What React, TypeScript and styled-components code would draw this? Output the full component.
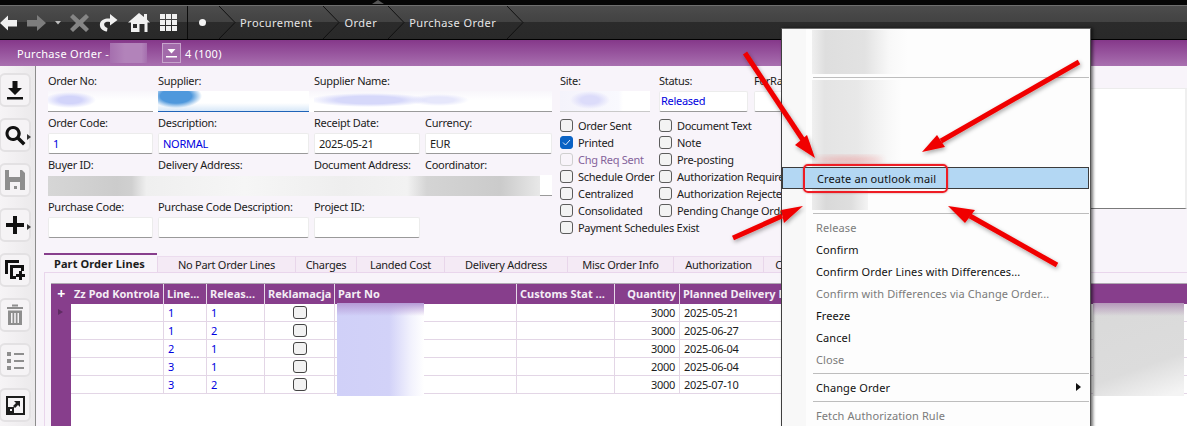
import React from 'react';
import styled, { createGlobalStyle, css } from 'styled-components';

const Global = createGlobalStyle`
  html, body { margin: 0; padding: 0; background: #f8f4fa; }
  body { font-family: "Noto Sans", "Open Sans", sans-serif; font-size: 11px; letter-spacing: -0.28px; color: #1c1c1c; }
`;

const Page = styled.div`
  position: relative;
  width: 1187px;
  height: 426px;
  overflow: hidden;
`;

const BlackStrip = styled.div`
  position: relative;
  height: 5px;
  background: #050505;
`;

const Notch = styled.div`
  position: absolute;
  left: 372px;
  top: 0;
  border: 6px solid transparent;
  border-top: 0;
  border-bottom: 4px solid #555;
`;

const Toolbar = styled.div`
  display: flex;
  align-items: center;
  gap: 10px;
  height: 33px;
  border-top: 1px solid #6e6e6e;
  border-bottom: 1px solid #000;
  background: linear-gradient(#4c4c4c 0, #424242 50%, #2b2b2b 50%, #292929 100%);
`;

const ToolSlot = styled.svg`
  display: block;
  flex: none;
  overflow: visible;
`;

const Breadcrumbs = styled.div`
  display: flex;
  align-items: center;
  align-self: stretch;
  border-left: 1px solid #0c0c0c;
  padding-left: 11px;
  color: #e6e6e6;
  font-size: 11px;
  letter-spacing: 0.45px;
`;

const Dot = styled.span`
  width: 7px;
  height: 7px;
  border-radius: 50%;
  background: #f2f2f2;
  margin-right: 13px;
`;

const Chevron = styled.svg`
  flex: none;
  margin: 0 4px 0 11px;
  &:first-of-type { margin-left: 0; }
`;

const TitleBar = styled.div`
  display: flex;
  align-items: center;
  height: 26px;
  padding-left: 17px;
  color: #fff;
  font-size: 11px;
  letter-spacing: 0.3px;
  background: linear-gradient(#85388a, #a970b0);
`;

const TitleSmudge = styled.span`
  width: 37px;
  height: 20px;
  margin: 0 15px 0 1px;
  background: linear-gradient(90deg, #a56fae 0, #b283ba 40%, #b283ba 85%, #a56fae 100%);
`;

const DropButton = styled.button`
  display: flex;
  align-items: center;
  justify-content: center;
  width: 19px;
  height: 20px;
  margin-right: 4px;
  padding: 0;
  border: 1px solid #c7a4cc;
  background: #a26aaa;
`;

const Body = styled.div`
  display: flex;
  height: 360px;
`;

const Sidebar = styled.div`
  flex: none;
  display: flex;
  flex-direction: column;
  gap: 11px;
  width: 35px;
  padding-top: 7px;
  border-right: 1px solid #8c8c8c;
  background: linear-gradient(90deg, #f6f4f6, #ebe9eb);
`;

const SideButton = styled.button`
  position: relative;
  display: flex;
  align-items: center;
  justify-content: center;
  flex: none;
  width: 32px;
  height: 34px;
  margin-left: -1px;
  padding: 0;
  border: 2px solid #e3e1e3;
  border-radius: 6px;
  background: #f5f3f5;
`;

const MoreMark = styled.span`
  position: absolute;
  right: -2px;
  top: 14px;
  border: 3px solid transparent;
  border-left: 4px solid #333;
  border-right: 0;
`;

const Content = styled.div`
  flex: 1;
  min-width: 0;
  background: #f8f4fa;
`;

const FormArea = styled.div`
  display: flex;
  height: 187px;
  padding-left: 12px;
`;

const FormGrid = styled.div`
  flex: none;
  display: grid;
  grid-template-columns: 105px 151px 106px 127px;
  grid-auto-rows: min-content;
  column-gap: 5px;
  padding-top: 8px;
  width: 504px;
`;

const Label = styled.label<{ $span?: number }>`
  display: block;
  height: 14px;
  margin-bottom: 3px;
  line-height: 14px;
  white-space: nowrap;
  ${(p) => p.$span && css`grid-column: span ${p.$span};`}
`;

const Field = styled.div<{ $blue?: boolean }>`
  box-sizing: border-box;
  height: 21px;
  margin-bottom: 4px;
  padding: 0 4px;
  line-height: 19px;
  background: #fff;
  border: 1px solid #ececec;
  border-bottom: 1px solid #9a9a9a;
  border-radius: 2px;
  white-space: nowrap;
  color: ${(p) => (p.$blue ? '#0000e0' : '#1c1c1c')};
`;

const StatusField = styled(Field)`
  padding: 0 1px;
  line-height: 17px;
`;

const SmudgeRow = styled.div`
  grid-column: 1 / -1;
  display: grid;
  grid-template-columns: subgrid;
  height: 21px;
  margin-bottom: 4px;
  background: linear-gradient(#f8f6fb, #fff 45%);
`;

const Smudged = styled.div<{ $bg: string; $line?: string; $wide?: boolean }>`
  box-sizing: border-box;
  height: 21px;
  background: ${(p) => p.$bg};
  border-bottom: 1px solid ${(p) => p.$line || '#9a9a9a'};
  ${(p) => p.$wide && css`grid-column: span 2;`}
`;

const SiteSmudge = styled(Smudged)`
  margin-bottom: 4px;
`;

const GreyRow = styled.div`
  grid-column: 1 / -1;
  display: flex;
  height: 21px;
  margin-bottom: 4px;
`;

const GreyBand = styled.div`
  flex: 1;
  height: 20px;
  margin-top: 1px;
  background: linear-gradient(90deg, #d6d6d6 0, #cccccc 14%, #d0d0d0 17%, #efefef 20%, #f6f6f6 40%, #eeeeee 60%, #f2f2f2 73%, #d4d4d4 77%, #cbcbcb 92%, #e8e8e8 100%);
`;

const GreyEnd = styled.div`
  width: 12px;
  box-sizing: border-box;
  background: #fff;
  border-bottom: 1px solid #9a9a9a;
`;

const StatusColumn = styled.div`
  flex: none;
  width: 531px;
  margin-left: 8px;
  padding-top: 8px;
`;

const StatusFields = styled.div`
  display: grid;
  grid-template-columns: 90px 89px 100px;
  column-gap: 9px;
  & > *:nth-child(3n) { margin-left: -3px; }
`;

const Checks = styled.div`
  display: grid;
  grid-template-columns: 99px auto;
  grid-auto-rows: 17px;
  margin-top: 1px;
`;

const CheckRow = styled.div<{ $muted?: boolean }>`
  display: flex;
  align-items: center;
  gap: 5px;
  white-space: nowrap;
  color: ${(p) => (p.$muted ? '#84639a' : 'inherit')};
`;

const Box = styled.span<{ $on?: boolean; $off?: boolean }>`
  flex: none;
  box-sizing: border-box;
  display: flex;
  align-items: center;
  justify-content: center;
  width: 13px;
  height: 13px;
  border: 1px solid ${(p) => (p.$on ? '#0a62c4' : p.$off ? '#cfcfcf' : '#5c5c5c')};
  border-radius: 3px;
  background: ${(p) => (p.$on ? '#0a62c4' : p.$off ? '#f8f4fa' : '#f3f3f3')};
`;

const SidePanel = styled.div`
  flex: 1;
  box-sizing: border-box;
  height: 121px;
  margin-top: 22px;
  background: #fff;
  border-top: 1px solid #ececec;
  border-bottom: 1px solid #7a7a7a;
  border-right: 2px solid #efefef;
`;

const TabBar = styled.div`
  display: flex;
  align-items: flex-end;
  height: 19px;
  margin-left: 8px;
`;

const Tab = styled.div<{ $active?: boolean; $w: number }>`
  flex: none;
  box-sizing: border-box;
  width: ${(p) => p.$w}px;
  text-align: center;
  white-space: nowrap;
  ${(p) =>
    p.$active
      ? css`
          height: 19px;
          padding: 2px 0 0 10px;
          border-top: 2px solid #873e8c;
          font-weight: 700;
          letter-spacing: 0.1px;
          line-height: 14px;
          text-align: left;
          background: #f8f4fa;
        `
      : css`
          height: 16px;
          line-height: 15px;
          background: #f4eaf5;
          border-top: 1px solid #ecdcee;
          border-left: 1px solid #e8d6ea;
        `}
`;

const TabPanel = styled.div`
  height: 154px;
  margin-left: 8px;
  padding: 10px 0 0 6px;
  border-top: 1px solid #e9d6ec;
  border-left: 1px solid #e9d6ec;
`;

const GridBox = styled.div`
  display: flex;
  height: 143px;
  border-top: 1px solid #b0a8b2;
  background: #fff;
`;

const Stripe = styled.div`
  flex: none;
  width: 20px;
  background: #873e8c;
  color: #fff;
  font-weight: 700;
  font-size: 14px;
  text-align: center;
  line-height: 20px;
`;

const RowMark = styled.div`
  width: 0;
  height: 0;
  margin: 5px 0 0 7px;
  border: 3px solid transparent;
  border-left: 5px solid #5f2c63;
  border-right: 0;
`;

const columns = '93px 43px 58px 70px 182px 98px 65px 400px 120px';

const GridRows = styled.div`
  flex: 1;
  min-width: 0;
`;

const HeadRow = styled.div`
  display: grid;
  grid-template-columns: ${columns};
  height: 20px;
  background: #873e8c;
  color: #f4edf5;
  font-weight: 700;
  letter-spacing: 0;
  line-height: 19px;
`;

const HeadCell = styled.div<{ $right?: boolean }>`
  box-sizing: border-box;
  padding: 0 3px;
  overflow: hidden;
  white-space: nowrap;
  border-right: 1px solid #e6d8e8;
  text-align: ${(p) => (p.$right ? 'right' : 'left')};
`;

const DataRow = styled.div`
  display: grid;
  grid-template-columns: ${columns};
  height: 18px;
  box-sizing: border-box;
  border-bottom: 1px solid #e3d6e6;
  line-height: 17px;
`;

const DataCell = styled.div<{ $right?: boolean; $blue?: boolean; $center?: boolean }>`
  box-sizing: border-box;
  display: flex;
  align-items: center;
  justify-content: ${(p) => (p.$right ? 'flex-end' : p.$center ? 'center' : 'flex-start')};
  padding: 0 4px;
  border-right: 1px solid #e3d6e6;
  color: ${(p) => (p.$blue ? '#0000e0' : '#1c1c1c')};
`;

const RowBox = styled.span`
  box-sizing: border-box;
  width: 14px;
  height: 13px;
  border: 1px solid #444;
  border-radius: 3px;
  background: #f2f2f2;
`;

const Patch = styled.div<{ $bg: string }>`
  position: absolute;
  background: ${(p) => p.$bg};
`;

const PartPatch = styled(Patch)`
  left: 337px;
  top: 303px;
  width: 87px;
  height: 93px;
`;

const RightPatch = styled(Patch)`
  left: 1093px;
  top: 303px;
  width: 91px;
  height: 93px;
`;

const Menu = styled.div`
  position: absolute;
  left: 781px;
  top: 28px;
  box-sizing: border-box;
  width: 310px;
  height: 420px;
  padding-top: 1px;
  background: linear-gradient(90deg, #f8f8f8 0, #f8f8f8 24px, #fdfdfd 24px);
  border-left: 1px solid #3f3f3f;
  border-top: 1px solid #6a6a6a;
  border-right: 1px solid #555;
  box-shadow: 2px 0 3px rgba(0, 0, 0, 0.55);
`;

const MenuSmudge = styled.div<{ $h: number; $w: number; $bg: string }>`
  height: ${(p) => p.$h}px;
  width: ${(p) => p.$w}px;
  margin-left: 30px;
  background: ${(p) => p.$bg};
`;

const MenuSep = styled.div`
  height: 1px;
  margin: 3px 1px 2px 31px;
  background: #bdbdbd;
`;

const MenuItem = styled.div<{ $disabled?: boolean; $hot?: boolean }>`
  position: relative;
  display: flex;
  align-items: center;
  box-sizing: border-box;
  height: 22px;
  padding-left: 34px;
  letter-spacing: 0.1px;
  white-space: nowrap;
  color: ${(p) => (p.$disabled ? '#7b7b7b' : '#111')};
  ${(p) =>
    p.$hot &&
    css`
      margin: 0 1px 0 0;
      background: #b3d7f3;
      border: 1px solid #3c3c3c;
    `}
`;

const SubArrow = styled.span`
  position: absolute;
  right: 9px;
  top: 7px;
  border: 4px solid transparent;
  border-left: 5px solid #111;
  border-right: 0;
`;

const Annotations = styled.svg`
  position: absolute;
  left: 0;
  top: 0;
  pointer-events: none;
`;

const Highlight = styled.div`
  position: absolute;
  left: 803px;
  top: 164px;
  width: 145px;
  height: 29px;
  box-sizing: border-box;
  border: 2px solid #ee1c24;
  border-radius: 5px;
  box-shadow: 0 0 2px rgba(160, 0, 0, 0.5);
`;

const Glyph = ({ children, fill = '#111' }: { children: React.ReactNode; fill?: string }) => (
  <svg width="24" height="24" viewBox="0 0 24 24" fill={fill}>
    {children}
  </svg>
);

const ChevronMark = () => (
  <Chevron width="17" height="33" viewBox="0 0 17 33">
    <path d="M0 0L16 16.5L0 33" fill="none" stroke="#111" strokeWidth="1" />
  </Chevron>
);

const Crumb = ({ text }: { text: string }) => (
  <>
    <span>{text}</span>
    <ChevronMark />
  </>
);

const arrows = [
  { tail: '745,53', shaft: '805,143', head: '815,158 795,145 807,135' },
  { tail: '1079,62', shaft: '941,141', head: '922,152 937,135 945,147' },
  { tail: '733,238', shaft: '782,216', head: '803,206 781,210 784,223' },
  { tail: '1057,265', shaft: '970,216', head: '948,206 975,210 965,223' },
];

const checkLeft = ['Order Sent', 'Printed', 'Chg Req Sent', 'Schedule Order', 'Centralized', 'Consolidated', 'Payment Schedules Exist'];
const checkRight = ['Document Text', 'Note', 'Pre-posting', 'Authorization Required', 'Authorization Rejected', 'Pending Change Order'];

const lines = [
  ['1', '1', '3000', '2025-05-21'],
  ['1', '2', '3000', '2025-06-27'],
  ['2', '1', '3000', '2025-06-04'],
  ['3', '1', '2000', '2025-06-04'],
  ['3', '2', '3000', '2025-07-10'],
];

const tabs: [string, number][] = [
  ['No Part Order Lines', 138],
  ['Charges', 61],
  ['Landed Cost', 88],
  ['Delivery Address', 123],
  ['Misc Order Info', 106],
  ['Authorization', 90],
  ['C', 30],
];

export default function App() {
  return (
    <Page>
      <Global />
      <BlackStrip>
        <Notch />
      </BlackStrip>
      <Toolbar>
        <ToolSlot width="17" height="18" viewBox="0 0 17 18">
          <path d="M0 9L8 1.5V6H17V12.5H8V16.5Z" fill="#f0f0f0" />
        </ToolSlot>
        <ToolSlot width="19" height="18" viewBox="0 0 19 18">
          <path d="M19 9L10 1V6H0V12.5H10V17Z" fill="#7d7d7d" />
        </ToolSlot>
        <ToolSlot width="4" height="4" viewBox="0 0 4 4">
          <path d="M-1 0H5L2 3.5Z" fill="#bdbdbd" />
        </ToolSlot>
        <ToolSlot width="19" height="18" viewBox="0 0 19 18">
          <path d="M3 0L9.5 6L16 0L19 3L13 9L19 15L16 18L9.5 12L3 18L0 15L6 9L0 3Z" fill="#858585" />
        </ToolSlot>
        <ToolSlot width="19" height="18" viewBox="0 0 19 18">
          <path d="M11 4.5C6.5 4 2 5.5 1 9.5C0.2 13.5 3 17 8 17.5L8.5 14C6 13.5 4.8 11.5 5.2 9.8C6 8 8 7.5 11 8V11.5L18.5 6L11 0Z" fill="#f0f0f0" />
        </ToolSlot>
        <ToolSlot width="22" height="21" viewBox="0 0 22 21">
          <path d="M11 1L16 5V2H19V7.5L22 10.5H19.5V20H3V10.5H0Z" fill="#f0f0f0" />
          <rect x="11.5" y="12" width="5" height="8" fill="#2b2b2b" />
          <rect x="5" y="12" width="4" height="4" fill="#2b2b2b" />
        </ToolSlot>
        <ToolSlot width="17" height="17" viewBox="0 0 17 17" fill="#f0f0f0">
          {[0, 6, 12].flatMap((y) =>
            [0, 6, 12].map((x) => <rect key={`${x}-${y}`} x={x} y={y} width="5" height="5" />)
          )}
        </ToolSlot>
        <Breadcrumbs>
          <Dot />
          <ChevronMark />
          <Crumb text="Procurement" />
          <Crumb text="Order" />
          <Crumb text="Purchase Order" />
        </Breadcrumbs>
      </Toolbar>

      <TitleBar>
        Purchase Order -<TitleSmudge />
        <DropButton>
          <svg width="11" height="9" viewBox="0 0 11 9" fill="#fff">
            <path d="M1.5 0H9.5L5.5 4.5Z" />
            <rect y="7" width="11" height="1.5" />
          </svg>
        </DropButton>
        4 (100)
      </TitleBar>

      <Body>
        <Sidebar>
          <SideButton>
            <Glyph>
              <path d="M9.5 3H14.5V10H19L12 17L5 10H9.5Z" />
              <rect x="4" y="19" width="16" height="2.5" />
            </Glyph>
          </SideButton>
          <SideButton>
            <Glyph>
              <path d="M10 3a7.5 7.5 0 1 0 4.2 13.7L20 22.5l2.5-2.5-5.8-5.8A7.5 7.5 0 0 0 10 3zm0 3a4.5 4.5 0 1 1 0 9 4.5 4.5 0 0 1 0-9z" />
            </Glyph>
            <MoreMark />
          </SideButton>
          <SideButton>
            <Glyph fill="#8e8e8e">
              <path d="M2 2H19L22 5V22H2ZM6 2V9H17V2ZM7 14V22H17V14Z" fillRule="evenodd" />
              <rect x="11" y="18" width="3" height="3" />
            </Glyph>
          </SideButton>
          <SideButton>
            <Glyph>
              <path d="M10 3H14V10H21V14H14V21H10V14H3V10H10Z" />
            </Glyph>
            <MoreMark />
          </SideButton>
          <SideButton>
            <Glyph>
              <path d="M2 2H16V5H5V16H2Z" />
              <path d="M7 7H21V13H18V10H10V18H13V21H7Z" />
              <path d="M16 13H19V16H22V19H19V22H16V19H13V16H16Z" />
            </Glyph>
          </SideButton>
          <SideButton>
            <Glyph fill="#8e8e8e">
              <rect x="4" y="4" width="16" height="2" />
              <rect x="9" y="1.5" width="6" height="2" />
              <path d="M5 7.5H19V22H5ZM8 10V20H9.5V10ZM11.2 10V20H12.8V10ZM14.5 10V20H16V10Z" fillRule="evenodd" />
            </Glyph>
          </SideButton>
          <SideButton>
            <Glyph fill="#8e8e8e">
              <rect x="4" y="4" width="4" height="4" />
              <rect x="11" y="5" width="10" height="2" />
              <rect x="4" y="11" width="4" height="4" />
              <rect x="11" y="12" width="10" height="2" />
              <rect x="4" y="18" width="4" height="4" />
              <rect x="11" y="19" width="10" height="2" />
            </Glyph>
          </SideButton>
          <SideButton>
            <Glyph fill="#1c1c1c">
              <path d="M3 3H22V22H3ZM5 5V20H20V5Z" fillRule="evenodd" />
              <path d="M5 14H11V20H5ZM7 16V18H9V16Z" fillRule="evenodd" />
              <path d="M11 8H17V14L15 12L12 15L10 13L13 10Z" />
            </Glyph>
          </SideButton>
        </Sidebar>

        <Content>
          <FormArea>
            <FormGrid>
              <Label>Order No:</Label>
              <Label>Supplier:</Label>
              <Label $span={2}>Supplier Name:</Label>
              <SmudgeRow>
                <Smudged $bg="radial-gradient(ellipse 26px 8px at 22px 9px, #d2d4fa 45%, transparent 100%)" />
                <Smudged
                  $line="#1f63b8"
                  $bg="radial-gradient(ellipse 26px 12px at 18px 5px, #4f98dc 60%, transparent 100%), linear-gradient(#fff 60%, #d8e8f8 100%)"
                />
                <Smudged
                  $wide
                  $bg="radial-gradient(ellipse 60px 7px at 55px 9px, #d6d8fa 55%, transparent 100%), radial-gradient(ellipse 30px 6px at 125px 9px, #e6e7fb 50%, transparent 100%)"
                />
              </SmudgeRow>

              <Label>Order Code:</Label>
              <Label>Description:</Label>
              <Label>Receipt Date:</Label>
              <Label>Currency:</Label>
              <Field $blue>1</Field>
              <Field $blue>NORMAL</Field>
              <Field>2025-05-21</Field>
              <Field>EUR</Field>

              <Label>Buyer ID:</Label>
              <Label>Delivery Address:</Label>
              <Label>Document Address:</Label>
              <Label>Coordinator:</Label>
              <GreyRow>
                <GreyBand />
                <GreyEnd />
              </GreyRow>

              <Label>Purchase Code:</Label>
              <Label>Purchase Code Description:</Label>
              <Label $span={2}>Project ID:</Label>
              <Field />
              <Field />
              <Field />
            </FormGrid>

            <StatusColumn>
              <StatusFields>
                <Label>Site:</Label>
                <Label>Status:</Label>
                <Label>ForRa</Label>
                <SiteSmudge
                  $line="#c9c9c9"
                  $bg="radial-gradient(ellipse 20px 9px at 30px 9px, #dcdcfa 45%, transparent 100%), linear-gradient(90deg, #f4f3fb 0, #f9f9fe 65%, #fff 70%)"
                />
                <StatusField $blue>Released</StatusField>
                <Field />
              </StatusFields>
              <Checks>
                {checkLeft.map((label, i) => (
                  <React.Fragment key={label}>
                    <CheckRow $muted={label === 'Chg Req Sent'}>
                      <Box $on={label === 'Printed'} $off={label === 'Chg Req Sent'}>
                        {label === 'Printed' && (
                          <svg width="9" height="9" viewBox="0 0 9 9">
                            <path d="M1 4.5L3.5 7L8 2" fill="none" stroke="#dfeafa" strokeWidth="1" />
                          </svg>
                        )}
                      </Box>
                      {label}
                    </CheckRow>
                    {checkRight[i] ? (
                      <CheckRow>
                        <Box />
                        {checkRight[i]}
                      </CheckRow>
                    ) : (
                      <span />
                    )}
                  </React.Fragment>
                ))}
              </Checks>
            </StatusColumn>
            <SidePanel />
          </FormArea>

          <TabBar>
            <Tab $active $w={113}>
              Part Order Lines
            </Tab>
            {tabs.map(([label, w]) => (
              <Tab key={label} $w={w}>
                {label}
              </Tab>
            ))}
          </TabBar>

          <TabPanel>
            <GridBox>
              <Stripe>
                +
                <RowMark />
              </Stripe>
              <GridRows>
                <HeadRow>
                  <HeadCell>Zz Pod Kontrola</HeadCell>
                  <HeadCell>Line...</HeadCell>
                  <HeadCell>Releas...</HeadCell>
                  <HeadCell>Reklamacja</HeadCell>
                  <HeadCell>Part No</HeadCell>
                  <HeadCell>Customs Stat ...</HeadCell>
                  <HeadCell $right>Quantity</HeadCell>
                  <HeadCell>Planned Delivery Date</HeadCell>
                  <HeadCell />
                </HeadRow>
                {lines.map(([line, release, qty, date], i) => (
                  <DataRow key={i}>
                    <DataCell />
                    <DataCell $blue>{line}</DataCell>
                    <DataCell $blue>{release}</DataCell>
                    <DataCell $center>
                      <RowBox />
                    </DataCell>
                    <DataCell />
                    <DataCell />
                    <DataCell $right>{qty}</DataCell>
                    <DataCell>{date}</DataCell>
                    <DataCell />
                  </DataRow>
                ))}
              </GridRows>
            </GridBox>
          </TabPanel>
        </Content>
      </Body>

      <PartPatch $bg="linear-gradient(180deg, #b59ad6 0, rgba(190, 170, 225, 0) 14%), linear-gradient(90deg, #d0d0f8 0, #d2d2f8 60%, #f2f2fd 85%, #fff 100%)" />
      <RightPatch $bg="linear-gradient(180deg, #b598ba 0, rgba(216, 216, 216, 0) 14%), linear-gradient(160deg, #d9d9d9 0, #dcdcdc 65%, #f4f4f4 95%)" />

      <Menu>
        <MenuSmudge $h={44} $w={96} $bg="linear-gradient(90deg, #efefef 0, #dedede 14%, #e2e2e2 55%, #f8f8f8 80%, #fdfdfd 100%)" />
        <MenuSep />
        <MenuSmudge $h={87} $w={90} $bg="linear-gradient(90deg, #f0f0f0 0, #e4e4e4 14%, #e8e8e8 50%, #f8f8f8 85%, #fdfdfd 100%)" />
        <MenuItem $hot>Create an outlook mail</MenuItem>
        <MenuSmudge $h={21} $w={56} $bg="linear-gradient(90deg, #ececec 0, #d9d9d9 25%, #dedede 70%, #f4f4f4 100%)" />
        <MenuSep />
        <MenuItem $disabled>Release</MenuItem>
        <MenuItem>Confirm</MenuItem>
        <MenuItem>Confirm Order Lines with Differences...</MenuItem>
        <MenuItem $disabled>Confirm with Differences via Change Order...</MenuItem>
        <MenuItem>Freeze</MenuItem>
        <MenuItem>Cancel</MenuItem>
        <MenuItem $disabled>Close</MenuItem>
        <MenuSep />
        <MenuItem>
          Change Order
          <SubArrow />
        </MenuItem>
        <MenuSep />
        <MenuItem $disabled>Fetch Authorization Rule</MenuItem>
      </Menu>

      <Highlight />
      <Annotations width="1187" height="426" viewBox="0 0 1187 426">
        <defs>
          <filter id="soft" x="-50%" y="-50%" width="200%" height="200%">
            <feGaussianBlur stdDeviation="3" />
          </filter>
          <filter id="shade" x="-10%" y="-10%" width="120%" height="120%">
            <feDropShadow dx="1" dy="2" stdDeviation="2" floodColor="#000" floodOpacity="0.35" />
          </filter>
        </defs>
        <ellipse cx="849" cy="160" rx="34" ry="3" fill="#f43030" opacity="0.3" filter="url(#soft)" />
        <g filter="url(#shade)">
          {arrows.map((a) => (
            <g key={a.tail} fill="#f00000" stroke="#f00000">
              <polyline points={`${a.tail} ${a.shaft}`} strokeWidth="5" fill="none" />
              <polygon points={a.head} strokeWidth="0" />
            </g>
          ))}
        </g>
      </Annotations>
    </Page>
  );
}
